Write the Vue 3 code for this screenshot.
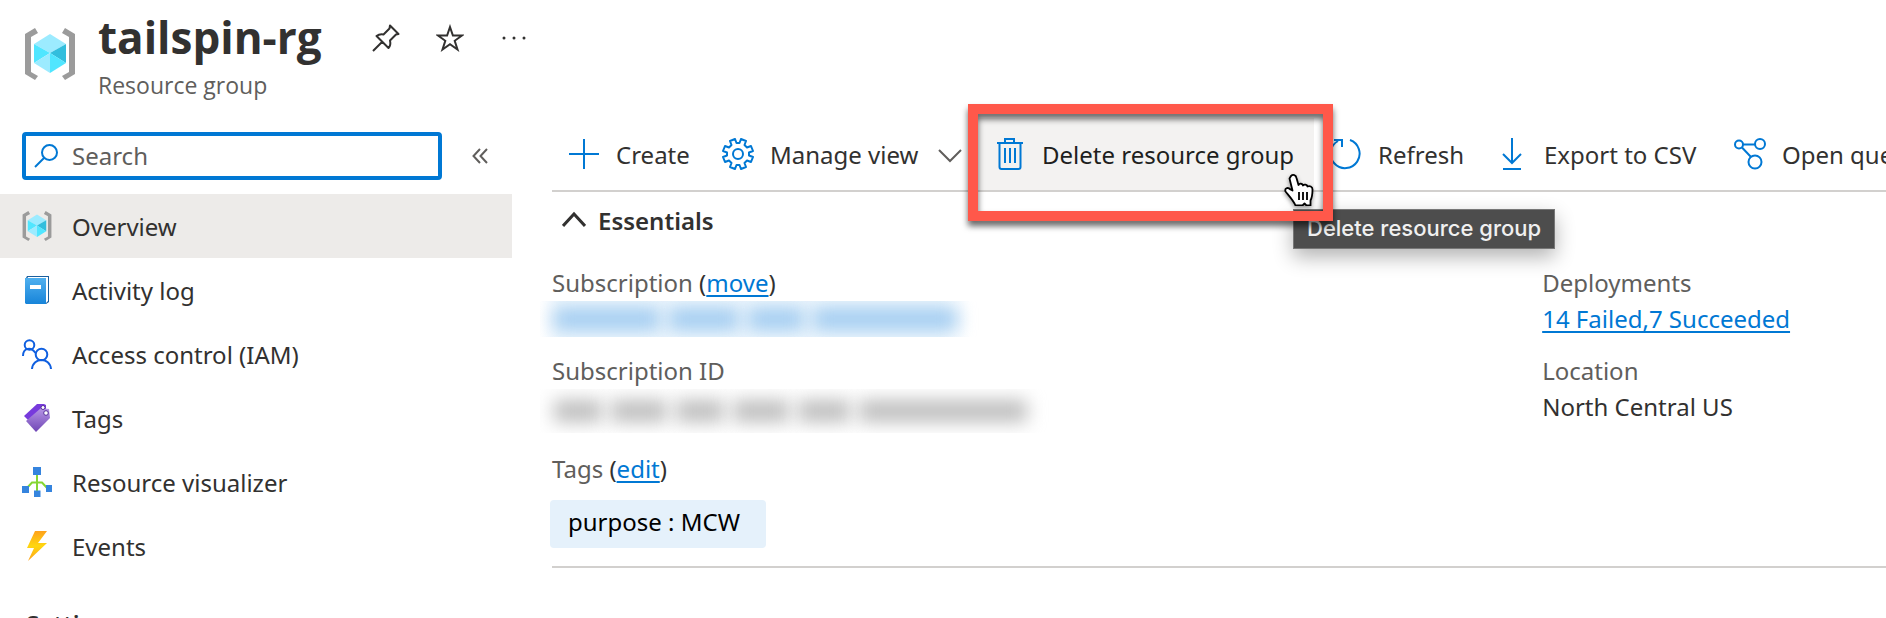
<script setup>
const nav = [
  { id: 'overview', label: 'Overview', active: true },
  { id: 'log', label: 'Activity log' },
  { id: 'iam', label: 'Access control (IAM)' },
  { id: 'tags', label: 'Tags' },
  { id: 'visualizer', label: 'Resource visualizer' },
  { id: 'events', label: 'Events' },
]
const subscriptionBars = [106, 70, 56, 144]
const idBars = [48, 56, 48, 56, 52, 168]
</script>

<template>
  <div class="blade">
    <header class="header">
      <svg class="logo" viewBox="0 0 52 52" aria-hidden="true">
        <path d="M11 0l3 5-7 4v35l7 4-3 4-10-6V6z" fill="#9b9b9b" />
        <path d="M41 0l-3 5 7 4v35l-7 4 3 4 10-6V6z" fill="#9b9b9b" />
        <path d="M26 6l16 10-16 9-16-9z" fill="#9cebff" />
        <path d="M10 16l16 9-16 10z" fill="#50e6ff" />
        <path d="M42 16v19l-16-10z" fill="#32bedd" />
        <path d="M10 35l16-10v20z" fill="#9cebff" />
        <path d="M42 35l-16-10v20z" fill="#50e6ff" />
      </svg>
      <div class="heading">
        <h1>tailspin-rg</h1>
        <p>Resource group</p>
      </div>
      <div class="head-actions">
        <button type="button" aria-label="Pin">
          <svg viewBox="0 0 28 28"><path d="M18 1.500l8.500 8.500-2.500.5-6 6c.8 3.500 0 6-1.500 7.500L4.500 12c2-1.500 4.500-2 7-1.500l6-6zM10 18L1 27" fill="none" stroke="#323130" stroke-width="2" stroke-linejoin="round" /></svg>
        </button>
        <button type="button" aria-label="Favorite">
          <svg viewBox="0 0 28 28"><path d="M14 3l2.900 8.500h9.100l-7.300 5.300 2.800 8.700-7.500-5.300-7.500 5.300 2.800-8.700L2 11.500h9.100z" fill="none" stroke="#323130" stroke-width="2" /></svg>
        </button>
        <button type="button" aria-label="More">
          <svg viewBox="0 0 28 28"><g fill="#323130"><circle cx="4" cy="14" r="1.500" /><circle cx="14" cy="14" r="1.500" /><circle cx="24" cy="14" r="1.500" /></g></svg>
        </button>
      </div>
    </header>

    <div class="body">
      <aside class="sidebar">
        <div class="search-row">
          <label class="search">
            <svg viewBox="0 0 24 24" aria-hidden="true"><circle cx="15.500" cy="8.500" r="7.500" /><path d="M10.500 13.500L1 23" /></svg>
            <input type="text" placeholder="Search" aria-label="Search" />
          </label>
          <button type="button" class="collapse" aria-label="Collapse menu">
            <svg viewBox="0 0 16 16"><path d="M8 1L1.500 8 8 15M15 1L8.500 8l6.500 7" /></svg>
          </button>
        </div>
        <nav>
          <a v-for="item in nav" :key="item.id" href="#" :class="{ active: item.active }">
            <svg v-if="item.id === 'overview'" viewBox="0 0 52 52">
              <path d="M11 0l3 5-7 4v35l7 4-3 4-10-6V6zM41 0l-3 5 7 4v35l-7 4 3 4 10-6V6z" fill="#9b9b9b" />
              <path d="M26 6l16 10-16 9-16-9z" fill="#9cebff" />
              <path d="M10 16l16 9-16 10z" fill="#50e6ff" />
              <path d="M42 16v19l-16-10z" fill="#32bedd" />
              <path d="M10 35l16-10v20z" fill="#9cebff" />
              <path d="M42 35l-16-10v20z" fill="#50e6ff" />
            </svg>
            <svg v-else-if="item.id === 'log'" viewBox="0 0 30 30">
              <defs><linearGradient id="book" x2="0" y2="1"><stop stop-color="#50b0ef" /><stop offset="1" stop-color="#1784d9" /></linearGradient></defs>
              <path d="M5 1h22v26l-3 2H4V3z" fill="#1b5f9e" />
              <path d="M6 2h20v24l-2 2V4H5z" fill="#fff" />
              <path d="M3 3h21v26H4l-1-1z" fill="url(#book)" />
              <path d="M8 10h11v4H8z" fill="#fff" />
            </svg>
            <svg v-else-if="item.id === 'iam'" viewBox="0 0 30 30">
              <g fill="none" stroke="#0f5fe0" stroke-width="2">
                <circle cx="7.500" cy="6" r="4.800" /><circle cx="19.500" cy="15.500" r="5.800" />
                <path d="M1 17c0-8 8-10 12.500-3M10 30c1-12 18-12 19 0" />
              </g>
            </svg>
            <svg v-else-if="item.id === 'tags'" viewBox="0 0 30 30">
              <defs><linearGradient id="tag" x2="0" y2="1"><stop stop-color="#b796e6" /><stop offset="1" stop-color="#6f46b5" /></linearGradient></defs>
              <path d="M2 13L15 1h7l2 1v7L8 19z" fill="#773adc" />
              <path d="M4 18L19 5l8 1 1 9-14 14z" fill="url(#tag)" />
              <circle cx="21" cy="4.500" r="2" fill="#fff" stroke="#552f99" stroke-width="1" />
              <circle cx="24" cy="10" r="2.300" fill="#fff" stroke="#552f99" stroke-width="1" />
            </svg>
            <svg v-else-if="item.id === 'visualizer'" viewBox="0 0 30 30">
              <path d="M15 7v18M4 22l6-6.500h10l6 6.500" fill="none" stroke="#86d633" stroke-width="2" />
              <g fill="#3584de"><rect x="11" width="8" height="8" /><rect y="19" width="7" height="7" /><rect x="12" y="23.500" width="6.500" height="6.500" /><rect x="24" y="18" width="6" height="7" /></g>
            </svg>
            <svg v-else viewBox="0 0 30 30">
              <defs><linearGradient id="bolt" x2="0" y2="1"><stop stop-color="#fea11b" /><stop offset=".5" stop-color="#ffd70f" /><stop offset="1" stop-color="#fea11b" /></linearGradient></defs>
              <path d="M13 0h12l-9 12h9L6 30l6-13H5z" fill="url(#bolt)" />
            </svg>
            <span>{{ item.label }}</span>
          </a>
        </nav>
        <h2 class="section">Settings</h2>
      </aside>

      <main class="content">
        <div class="toolbar">
          <button type="button">
            <svg viewBox="0 0 32 32"><path d="M1 16h30M16 1v30" /></svg>
            <span>Create</span>
          </button>
          <button type="button">
            <svg viewBox="0 0 32 32">
              <path d="M13 1l1.500 4h3L19 1l5 2-1.500 4 2.500 2.500L29 8l2 5-4 1.500v3l4 1.500-2 5-4-1.500-2.500 2.500 1.500 4-5 2-1.500-4h-3L13 31l-5-2 1.500-4L7 22.500 3 24l-2-5 4-1.500v-3L1 13l2-5 4 1.500L9.500 7 8 3z" stroke-linejoin="round" />
              <circle cx="16" cy="16" r="5" />
            </svg>
            <span>Manage view</span>
            <svg class="chev" viewBox="0 0 24 24"><path d="M1 8l11 11L23 8" /></svg>
          </button>
          <div class="delete-wrap">
            <button type="button" class="hovered">
              <svg viewBox="0 0 32 32"><path d="M3 5h26M5.500 5v24q0 2 2 2h17q2 0 2-2V5M11 5V1h9v4M11 10v15M16 10v15M21 10v15" /></svg>
              <span>Delete resource group</span>
            </button>
            <div class="tooltip" role="tooltip">Delete resource group</div>
            <div class="highlight"></div>
            <svg class="cursor" viewBox="0 0 30 32" aria-hidden="true">
              <path d="M7 2c2-2 5-1 5.500 2l2 7c1-2 4-1.500 4.500.5 1-1.500 4-1 4.500 1 2-1 5 0 5 3 0 5 0 7-2 11v5h-4l-2-2-2 2h-7c-2-5-5-8-10-14-1-3 2-5 5-2l2 1-3-12z" fill="#fff" stroke="#000" stroke-width="1.800" stroke-linejoin="round" />
              <path d="M15 18v8M19 18v8M23 18v8" stroke="#000" stroke-width="1.800" />
            </svg>
          </div>
          <button type="button">
            <svg viewBox="0 0 32 32"><path d="M20 2a14.500 14.500 0 1 1-12 1M4 2h8v7" /></svg>
            <span>Refresh</span>
          </button>
          <button type="button">
            <svg viewBox="0 0 32 32"><path d="M16 0v25M7 16l9 9 9-9M7 31h18" /></svg>
            <span>Export to CSV</span>
          </button>
          <button type="button">
            <svg viewBox="0 0 32 32"><circle cx="5" cy="6.500" r="4" /><circle cx="26" cy="6" r="5" /><circle cx="21" cy="24" r="6.500" /><path d="M9 6.500h12M8 9.500l9 9.500" /></svg>
            <span>Open query</span>
          </button>
        </div>

        <button type="button" class="essentials" aria-expanded="true">
          <svg viewBox="0 0 24 24"><path d="M1 17L12 5l11 12" /></svg>
          Essentials
        </button>

        <div class="props">
          <div class="prop">
            <div class="name">Subscription <span>(<a href="#">move</a>)</span></div>
            <div class="redacted blue"><i v-for="(w, i) in subscriptionBars" :key="i" :style="{ width: w + 'px' }"></i></div>
          </div>
          <div class="prop">
            <div class="name">Deployments</div>
            <div class="value"><a href="#">14 Failed,7 Succeeded</a></div>
          </div>
          <div class="prop">
            <div class="name">Subscription ID</div>
            <div class="redacted"><i v-for="(w, i) in idBars" :key="i" :style="{ width: w + 'px' }"></i></div>
          </div>
          <div class="prop">
            <div class="name">Location</div>
            <div class="value">North Central US</div>
          </div>
        </div>
        <div class="name tags-name">Tags <span>(<a href="#">edit</a>)</span></div>
        <span class="pill">purpose : MCW</span>
        <div class="rule"></div>
      </main>
    </div>
  </div>
</template>

<style>
html, body { margin: 0; background: #fff; overflow: hidden; }
</style>

<style scoped>
.blade { box-sizing: border-box; height: 100vh; overflow: hidden; display: flex; flex-direction: column; color: #323130; font: 24px/36px "Noto Sans", "Open Sans", sans-serif; }
button { font: inherit; color: inherit; background: none; border: 0; padding: 0; margin: 0; white-space: nowrap; }
a { color: #0078d4; text-decoration: underline; text-decoration-thickness: 2px; text-underline-offset: 3px; }
svg { display: block; flex: none; }
.header { display: flex; height: 118px; flex: none; }
.logo { width: 54px; height: 52px; margin: 28px 21px 0 23px; }
.heading { padding-top: 7px; font-family: "Open Sans", "Noto Sans", sans-serif; }
h1 { margin: 0; font-size: 44px; line-height: 60px; font-weight: 700; }
.heading p { margin: 0; font-size: 23px; line-height: 36px; color: #605e5c; }
.head-actions { display: flex; gap: 36px; margin: 24px 0 0 50px; height: 28px; }
.head-actions svg { width: 28px; height: 28px; }
.body { display: flex; flex: 1; min-height: 0; }
.sidebar { width: 512px; flex: none; margin-right: 40px; }
.search-row { display: flex; align-items: center; height: 48px; margin: 14px 0 14px 22px; gap: 30px; }
.search { box-sizing: border-box; width: 420px; height: 48px; border: 4px solid #0078d4; border-radius: 4px; display: flex; align-items: center; padding-left: 8px; gap: 14px; }
.search svg { width: 24px; height: 24px; fill: none; stroke: #0078d4; stroke-width: 2; }
.search input { flex: 1; min-width: 0; border: 0; outline: 0; padding: 0; font: inherit; color: #323130; background: none; }
.search input::placeholder { color: #605e5c; opacity: 1; }
.collapse svg { width: 16px; height: 16px; fill: none; stroke: #605e5c; stroke-width: 2; }
nav a { display: flex; align-items: center; height: 64px; padding-left: 22px; gap: 20px; color: #323130; text-decoration: none; }
nav a.active { background: #edebe9; }
nav span, .toolbar button span { padding-top: 2px; }
nav svg { width: 30px; height: 30px; }
.section { margin: 28px 0 0 26px; font-size: 24px; line-height: 36px; font-weight: 600; }
.content { flex: 1; min-width: 0; }
.toolbar { display: grid; grid-template-columns: 154px 272px 336px 166px 238px auto; height: 72px; border-bottom: 2px solid #d2d0ce; }
.toolbar button { display: flex; align-items: center; height: 72px; padding: 0 16px; gap: 16px; }
.toolbar button svg { width: 32px; height: 32px; fill: none; stroke: #0078d4; stroke-width: 2; }
.toolbar button svg.chev { width: 24px; height: 24px; margin-left: auto; stroke: #605e5c; }
.delete-wrap { position: relative; z-index: 1; }
.delete-wrap .hovered { width: 100%; background: #f3f2f1; color: #201f1e; }
.highlight { position: absolute; left: -10px; top: -14px; right: -19px; bottom: -31px; border: 10px solid #ff584a; filter: drop-shadow(0 5px 3px rgba(0, 0, 0, .6)); }
.tooltip { position: absolute; left: 315px; top: 91px; box-sizing: border-box; height: 40px; padding: 0 13px; border: 1px solid #777; background: #4d4d4d; color: #f0f0f0; font: 500 22px/36px Inter, sans-serif; white-space: nowrap; box-shadow: 0 8px 20px rgba(0, 0, 0, .3); }
.cursor { position: absolute; left: 306px; top: 56px; width: 30px; height: 32px; filter: drop-shadow(0 2px 2px rgba(0, 0, 0, .4)); }
.essentials { display: flex; align-items: center; gap: 12px; height: 36px; margin: 11px 0 0 10px; font-weight: 600; }
.essentials svg { width: 24px; height: 24px; fill: none; stroke: #323130; stroke-width: 3; }
.props { display: grid; grid-template-columns: 2.88fr 1fr; row-gap: 16px; margin-top: 26px; }
.prop { height: 72px; }
.name { color: #605e5c; }
.name span { color: #323130; }
.redacted { display: flex; gap: 9px; align-items: center; height: 44px; margin-left: -12px; padding-left: 14px; overflow: hidden; }
.redacted i { height: 22px; background: #bdbdbd; filter: blur(9px); }
.redacted.blue { height: 36px; background: linear-gradient(90deg, #fff0, #eff7fd 20px, #eff7fd 400px, #fff0 430px); }
.redacted.blue i { background: #a0cbf0; }
.tags-name { margin-top: 26px; }
.pill { display: inline-block; box-sizing: border-box; height: 48px; line-height: 44px; margin: 13px 0 0 -2px; padding: 0 26px 0 18px; border-radius: 4px; background: #e5f1fb; color: #000; vertical-align: top; }
.rule { height: 2px; margin-top: 18px; background: #d2d0ce; }
</style>
